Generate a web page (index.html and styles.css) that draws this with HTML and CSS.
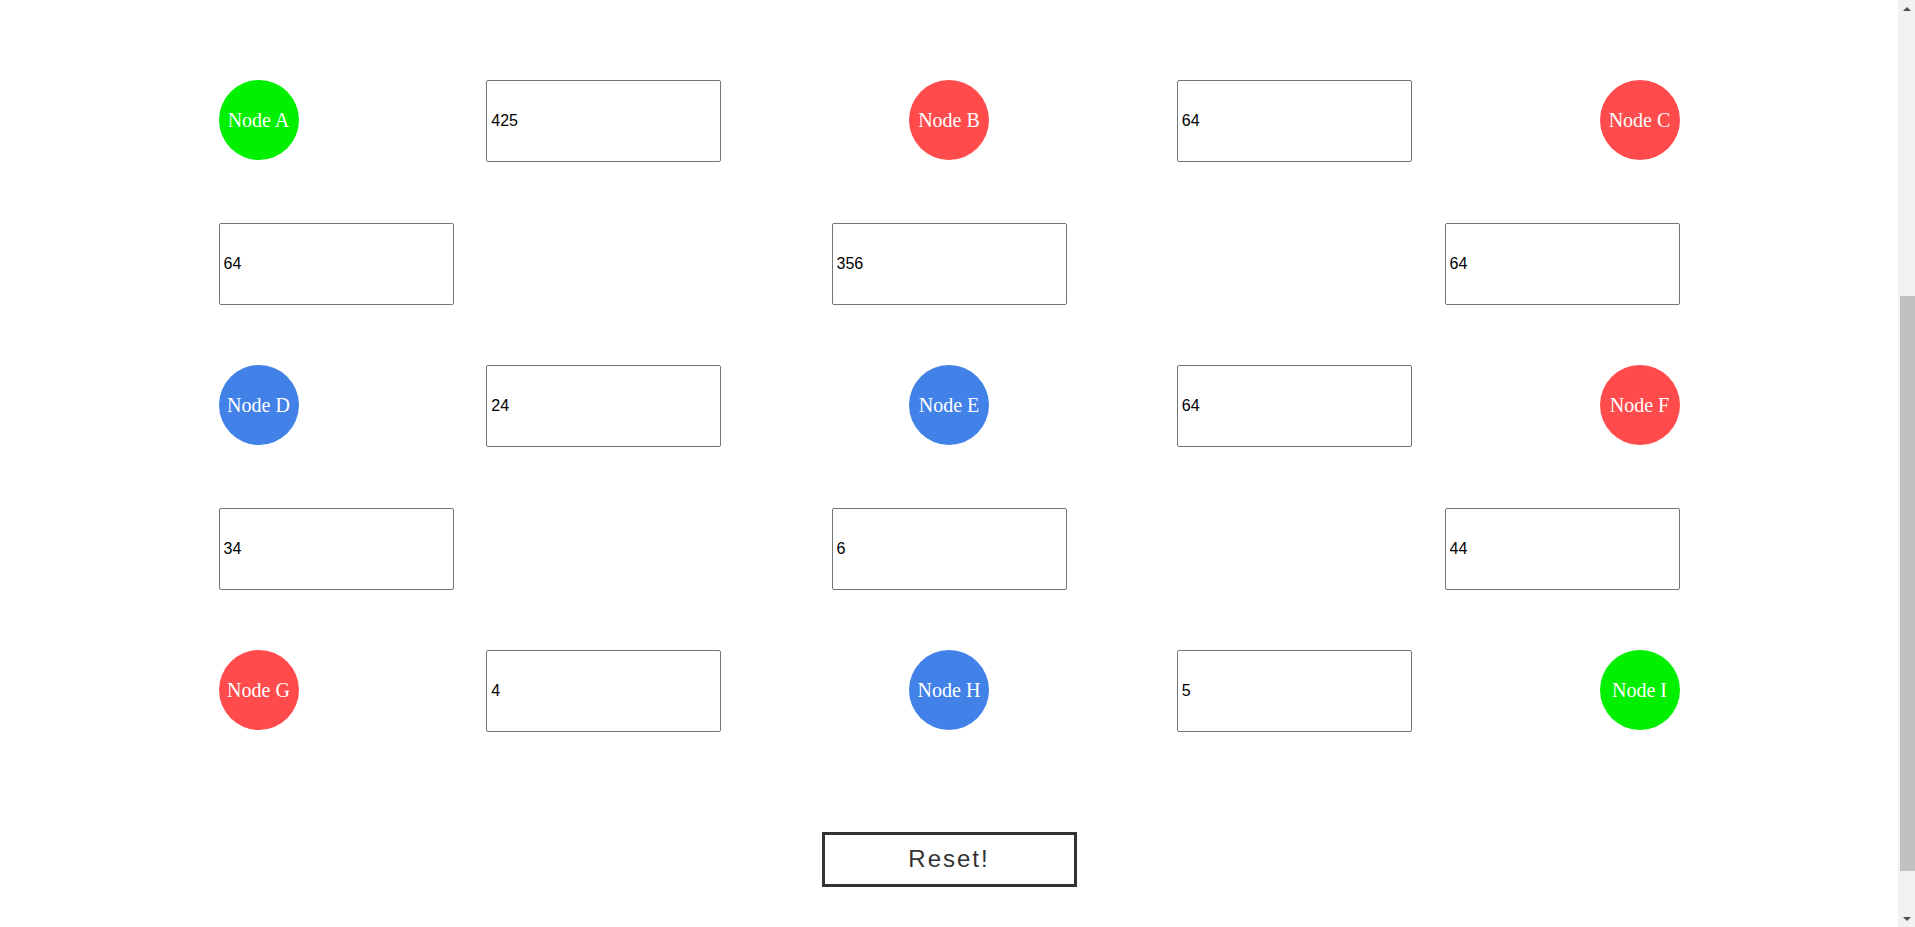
FILE: index.html
```html
<!DOCTYPE html>
<html lang="en">
<head>
<meta charset="utf-8">
<title>Nodes</title>
<link rel="stylesheet" href="styles.css">
</head>
<body>
<main class="board">
  <div class="row">
    <div class="node node-green">Node A</div>
    <input class="weight" type="text" value="425">
    <div class="node node-red">Node B</div>
    <input class="weight" type="text" value="64">
    <div class="node node-red">Node C</div>
  </div>
  <div class="row">
    <input class="weight" type="text" value="64">
    <input class="weight" type="text" value="356">
    <input class="weight" type="text" value="64">
  </div>
  <div class="row">
    <div class="node node-blue">Node D</div>
    <input class="weight" type="text" value="24">
    <div class="node node-blue">Node E</div>
    <input class="weight" type="text" value="64">
    <div class="node node-red">Node F</div>
  </div>
  <div class="row">
    <input class="weight" type="text" value="34">
    <input class="weight" type="text" value="6">
    <input class="weight" type="text" value="44">
  </div>
  <div class="row">
    <div class="node node-red">Node G</div>
    <input class="weight" type="text" value="4">
    <div class="node node-blue">Node H</div>
    <input class="weight" type="text" value="5">
    <div class="node node-green">Node I</div>
  </div>
  <button class="reset" type="button">Reset!</button>
</main>
<div class="scrollbar" aria-hidden="true">
  <div class="scroll-btn"><span class="arrow-up"></span></div>
  <div class="scroll-track"><div class="scroll-thumb"></div></div>
  <div class="scroll-btn"><span class="arrow-down"></span></div>
</div>
</body>
</html>
```

FILE: styles.css
```css
html,
body {
  height: 100%;
}

body {
  margin: 0 17px 0 0;
  background: #ffffff;
  font-family: "Liberation Sans", Arial, sans-serif;
  overflow: hidden;
}

.board {
  width: 1461px;
  margin: 0 auto;
  padding: 80px 0 0;
  display: flex;
  flex-direction: column;
  gap: 60.5px;
}

.row {
  display: flex;
  justify-content: space-between;
  align-items: flex-start;
  height: 82px;
}

.node {
  width: 80px;
  height: 80px;
  border-radius: 50%;
  display: flex;
  align-items: center;
  justify-content: center;
  color: #ffffff;
  font-family: "Liberation Serif", "Times New Roman", serif;
  font-size: 20px;
  white-space: nowrap;
}

.node-green {
  background: #00f000;
}

.node-red {
  background: #ff4b4b;
}

.node-blue {
  background: #4281e8;
}

.weight {
  box-sizing: border-box;
  width: 235px;
  height: 82px;
  margin: 0;
  padding: 1px 4px;
  border: 1px solid #767676;
  border-radius: 2px;
  background: #ffffff;
  color: #000000;
  font-family: "Liberation Sans", Arial, sans-serif;
  font-size: 16px;
}

.reset {
  box-sizing: border-box;
  align-self: center;
  width: 255px;
  height: 55px;
  margin-top: 39px;
  padding: 0;
  border: 3px solid #333333;
  background: #ffffff;
  color: #333333;
  font-family: "Liberation Sans", Arial, sans-serif;
  font-size: 24px;
  letter-spacing: 2px;
  cursor: pointer;
}

/* browser scrollbar look-alike */
.scrollbar {
  position: fixed;
  top: 0;
  right: 0;
  width: 17px;
  height: 100vh;
  display: flex;
  flex-direction: column;
  background: #f1f1f1;
}

.scroll-btn {
  height: 17px;
  flex: 0 0 17px;
  display: flex;
  align-items: center;
  justify-content: center;
}

.arrow-up,
.arrow-down {
  width: 0;
  height: 0;
  border-left: 4px solid transparent;
  border-right: 4px solid transparent;
}

.arrow-up {
  border-bottom: 4px solid #505050;
}

.arrow-down {
  border-top: 4px solid #505050;
}

.scroll-track {
  flex: 1;
  padding: 279px 0 0 2px;
}

.scroll-thumb {
  height: 575px;
  background: #c1c1c1;
}
```
